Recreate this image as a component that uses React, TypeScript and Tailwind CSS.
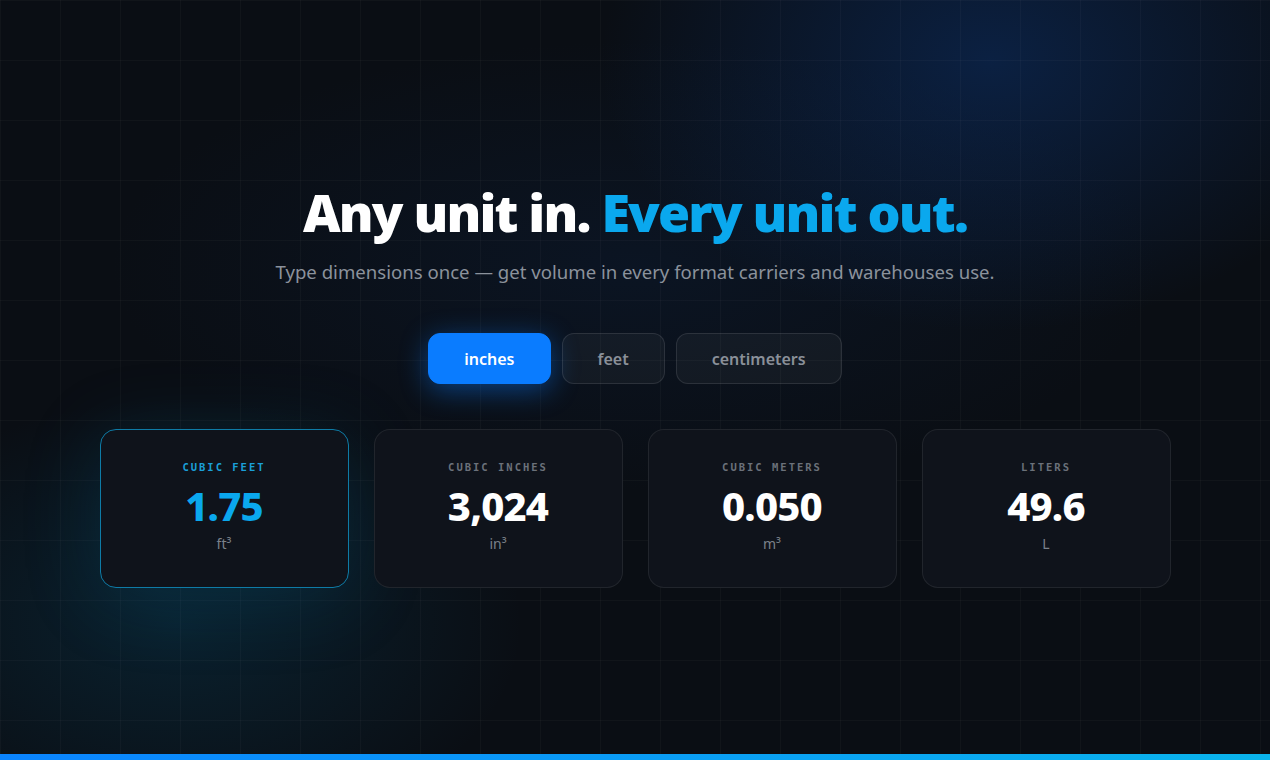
import React from "react";

const units = ["inches", "feet", "centimeters"];

const cards = [
  { label: "CUBIC FEET", value: "1.75", unit: "ft³", active: true },
  { label: "CUBIC INCHES", value: "3,024", unit: "in³", active: false },
  { label: "CUBIC METERS", value: "0.050", unit: "m³", active: false },
  { label: "LITERS", value: "49.6", unit: "L", active: false },
];

export default function App() {
  return (
    <div className="relative flex min-h-screen w-full flex-col overflow-hidden bg-[#0a0e14] font-['Noto_Sans',sans-serif] [background-image:radial-gradient(ellipse_520px_360px_at_78%_8%,rgba(12,58,130,0.42),transparent_75%),radial-gradient(ellipse_460px_300px_at_14%_82%,rgba(8,100,140,0.22),transparent_75%),radial-gradient(ellipse_700px_300px_at_50%_35%,rgba(14,40,80,0.25),transparent_75%)]">
      <div className="pointer-events-none absolute inset-0 [background-image:linear-gradient(rgba(255,255,255,0.028)_1px,transparent_1px),linear-gradient(90deg,rgba(255,255,255,0.028)_1px,transparent_1px)] [background-size:60px_60px] [background-position:0px_0px]" />
      <main className="relative flex flex-1 flex-col items-center pt-[182px]">
        <h1 className="text-[52px] font-black leading-[60px] tracking-[-0.035em] text-white">
          Any unit in. <span className="text-[#0aa8ee]">Every unit out.</span>
        </h1>
        <p className="mt-[18px] text-[18.6px] leading-[24px] text-[#8b929c]">
          Type dimensions once — get volume in every format carriers and warehouses use.
        </p>
        <div className="mt-[49px] flex gap-[11px]">
          {units.map((u, i) =>
            i === 0 ? (
              <button
                key={u}
                className="h-[51px] rounded-[12px] border border-[#0a7cff] bg-[#0a7cff] px-[35px] text-[16px] font-semibold text-white shadow-[0_6px_28px_rgba(10,124,255,0.45)]"
              >
                {u}
              </button>
            ) : (
              <button
                key={u}
                className="h-[51px] rounded-[12px] border border-white/10 bg-white/[0.04] px-[35px] text-[16px] font-semibold text-[#8a9099]"
              >
                {u}
              </button>
            )
          )}
        </div>
        <div className="mt-[45px] grid w-[1071px] grid-cols-4 gap-[25px]">
          {cards.map((c) => (
            <div
              key={c.label}
              className={
                c.active
                  ? "flex h-[159px] flex-col items-center rounded-[16px] border border-[#0e7ba6] bg-[#0f131b] pt-[31px] shadow-[0_10px_80px_rgba(8,130,180,0.18)]"
                  : "flex h-[159px] flex-col items-center rounded-[16px] border border-white/[0.08] bg-[#0f131b] pt-[31px]"
              }
            >
              <div
                className={
                  c.active
                    ? "font-['DejaVu_Sans_Mono',monospace] text-[10.5px] font-bold leading-[12px] tracking-[0.19em] text-[#1a9fd8]"
                    : "font-['DejaVu_Sans_Mono',monospace] text-[10.5px] font-bold leading-[12px] tracking-[0.19em] text-[#6b717a]"
                }
              >
                {c.label}
              </div>
              <div
                className={
                  c.active
                    ? "mt-[10px] text-[40px] font-extrabold leading-[46px] tracking-[-0.02em] text-[#0aa8ee]"
                    : "mt-[10px] text-[40px] font-extrabold leading-[46px] tracking-[-0.02em] text-white"
                }
              >
                {c.value}
              </div>
              <div className="mt-[6px] text-[14px] leading-[18px] text-[#7b818a]">{c.unit}</div>
            </div>
          ))}
        </div>
      </main>
      <div className="relative h-[6px] w-full bg-[linear-gradient(90deg,#0a84ff,#0ab4ec)]" />
    </div>
  );
}
